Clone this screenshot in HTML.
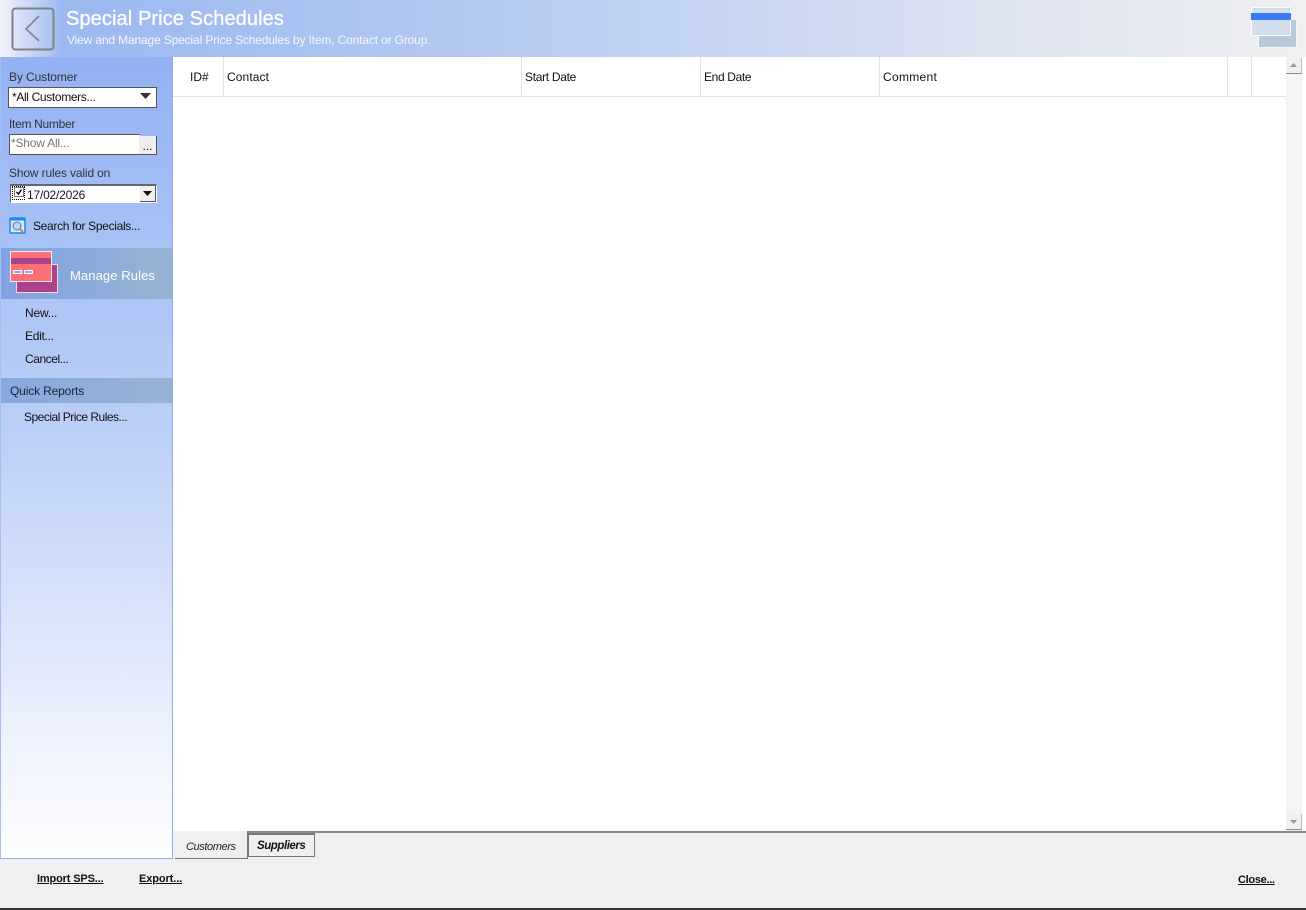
<!DOCTYPE html>
<html><head><meta charset="utf-8"><style>
html,body{margin:0;padding:0;width:1306px;height:910px;overflow:hidden;background:#f0f0f0;font-family:"Liberation Sans",sans-serif;font-size:12px;color:#111}
.a{position:absolute;white-space:nowrap}
.t{position:absolute;white-space:nowrap;line-height:14px}
.sep{position:absolute;top:57px;width:1px;height:39px;background:#e4e4e4}
</style></head><body>
<div class="a" style="left:0;top:0;width:1306px;height:57px;background:linear-gradient(90deg,#f2f4fa 0,#9db9f1 62px,#a3bdf0 200px,#bccff2 600px,#dde3f0 1000px,#eff0f2 1306px)"></div>
<svg class="a" style="left:0;top:0" width="70" height="57"><rect x="12.5" y="8.5" width="41" height="41" rx="3" fill="none" stroke="#7f8287" stroke-width="2"/><path d="M39 16L26 29L39 41" fill="none" stroke="#7f8287" stroke-width="1.6"/></svg>
<div class="t" style="left:66px;top:6px;font-size:20px;line-height:26px;color:#fff;-webkit-text-stroke:.3px #fff;letter-spacing:.1px">Special Price Schedules</div>
<div class="t" style="left:67px;top:33px;color:#f4f7ff;letter-spacing:-.15px">View and Manage Special Price Schedules by Item, Contact or Group.</div>
<svg class="a" style="left:1250px;top:6px" width="50" height="44"><rect x="8.500" y="13.500" width="38" height="28" fill="#b9c9dc" stroke="#f4f6fa"/><rect x="1.500" y="1.500" width="39" height="28" fill="#d4dfee" stroke="#fbfcfe"/><rect x="1" y="7" width="40" height="7" fill="#3a78f8"/></svg>

<div class="a" style="left:0;top:57px;width:171px;height:801px;background:linear-gradient(180deg,#93b1f3 0,#a9c2f5 190px,#bbcef7 370px,#d6e2fa 540px,#f0f4fd 700px,#fefeff 801px);border-right:1px solid #8eaef0;border-left:1px solid #a4bef2;border-bottom:1px solid #8eaef0"></div>
<div class="t" style="left:9px;top:70px;color:#333;letter-spacing:-.1px">By Customer</div>
<div class="a" style="left:8px;top:87px;width:147px;height:19px;background:#fff;border:1px solid #555"></div>
<div class="t" style="left:12px;top:90px;letter-spacing:-.35px">*All Customers...</div>
<svg class="a" style="left:140px;top:93px" width="12" height="7"><path d="M0 0H11L5.500 6Z" fill="#333"/></svg>
<div class="t" style="left:9px;top:117px;color:#333;letter-spacing:-.3px">Item Number</div>
<div class="a" style="left:9px;top:134px;width:130px;height:20px;background:#fff;border-top:1px solid #555;border-left:1px solid #555"></div>
<div class="a" style="left:139px;top:136px;width:18px;height:19px;background:#efefef;border-right:1px solid #555;border-bottom:1px solid #555;box-sizing:border-box;text-align:center;line-height:20px">...</div>
<div class="a" style="left:9px;top:154px;width:130px;height:1px;background:#555"></div>
<div class="t" style="left:11px;top:136px;color:#777;letter-spacing:-.2px">*Show All...</div>
<div class="t" style="left:9px;top:166px;color:#333;letter-spacing:-.15px">Show rules valid on</div>
<div class="a" style="left:10px;top:184px;width:147px;height:19px;background:#fff;border-top:2px solid #666;border-left:1px solid #666;border-right:1px solid #fff;border-bottom:1px solid #fff;box-sizing:border-box"></div>
<div class="a" style="left:12px;top:186px;width:13px;height:14px;border:1px dotted #000;box-sizing:border-box"></div>
<svg class="a" style="left:14px;top:187px" width="11" height="11"><rect x=".5" y=".5" width="9" height="9" fill="#fff" stroke="#777"/><path d="M2.500 5L4.500 7L7.500 2.500" fill="none" stroke="#000" stroke-width="1.400"/></svg>
<div class="t" style="left:27px;top:188px;color:#1a1033;letter-spacing:-.2px">17/02/2026</div>
<div class="a" style="left:140px;top:186px;width:16px;height:16px;background:#efefef;border-right:1px solid #555;border-bottom:1px solid #555;box-sizing:border-box"></div>
<svg class="a" style="left:143px;top:191px" width="10" height="6"><path d="M0 0H9L4.500 5Z" fill="#111"/></svg>
<svg class="a" style="left:9px;top:217px" width="17" height="17"><rect x="1" y="1" width="15" height="15" rx="1" fill="#d7e7fb" stroke="#1e88e8" stroke-width="1.500"/><rect x="1" y="1" width="15" height="2.500" fill="#1e88e8"/><circle cx="8" cy="9" r="4" fill="#bcd4ef" stroke="#5a7894"/><path d="M11 12L14 15" stroke="#d9822b" stroke-width="2"/></svg>
<div class="t" style="left:33px;top:219px;letter-spacing:-.32px">Search for Specials...</div>

<div class="a" style="left:1px;top:248px;width:171px;height:51px;background:linear-gradient(90deg,#80a2e3 0,#98b3d2 171px)"></div>
<svg class="a" style="left:9px;top:250px" width="50" height="44"><rect x="7.500" y="14.500" width="41" height="28" fill="#ab428c" stroke="#f3d7e8"/><rect x="1.500" y="1.500" width="41" height="30" fill="#ff6f78" stroke="#fdeaea"/><rect x="2" y="8" width="40" height="6" fill="#ab428c"/><rect x="4.500" y="20.500" width="8" height="3" fill="#8aaef0" stroke="#fff"/><rect x="15.500" y="20.500" width="8" height="3" fill="#8aaef0" stroke="#fff"/></svg>
<div class="t" style="left:70px;top:269px;font-size:13px;color:#fff;letter-spacing:.1px">Manage Rules</div>
<div class="t" style="left:25px;top:306px;letter-spacing:-.2px">New...</div>
<div class="t" style="left:25px;top:329px;letter-spacing:-.3px">Edit...</div>
<div class="t" style="left:25px;top:352px;letter-spacing:-.45px">Cancel...</div>
<div class="a" style="left:1px;top:378px;width:171px;height:25px;background:linear-gradient(90deg,#8aa7e0 0,#98b2d4 171px)"></div>
<div class="t" style="left:10px;top:384px;color:#14213d;letter-spacing:-.15px">Quick Reports</div>
<div class="t" style="left:24px;top:410px;letter-spacing:-.5px">Special Price Rules...</div>

<div class="a" style="left:173px;top:57px;width:1133px;height:774px;background:#fff"></div>
<div class="a" style="left:173px;top:96px;width:1113px;height:1px;background:#e4e4e4"></div>
<div class="sep" style="left:223px"></div><div class="sep" style="left:521px"></div><div class="sep" style="left:700px"></div><div class="sep" style="left:879px"></div><div class="sep" style="left:1227px"></div><div class="sep" style="left:1251px"></div>
<div class="t" style="left:190px;top:70px">ID#</div>
<div class="t" style="left:227px;top:70px;letter-spacing:.1px">Contact</div>
<div class="t" style="left:525px;top:70px;letter-spacing:-.3px">Start Date</div>
<div class="t" style="left:704px;top:70px;letter-spacing:-.35px">End Date</div>
<div class="t" style="left:883px;top:70px;letter-spacing:.3px">Comment</div>

<div class="a" style="left:1286px;top:57px;width:16px;height:774px;background-color:#f8f8f8;background-image:radial-gradient(#e6e6e6 .6px,transparent .7px);background-size:2px 2px"></div>
<div class="a" style="left:1286px;top:58px;width:16px;height:16px;background:#f0f0f0;border-bottom:1px solid #8a8a8a;border-right:1px solid #bbb;box-sizing:border-box"></div>
<svg class="a" style="left:1290px;top:62px" width="9" height="6"><path d="M0 5H7L3.500 1Z" fill="#999"/></svg>
<div class="a" style="left:1286px;top:814px;width:16px;height:16px;background:#f0f0f0;border-bottom:1px solid #8a8a8a;border-right:1px solid #bbb;box-sizing:border-box"></div>
<svg class="a" style="left:1290px;top:820px" width="9" height="6"><path d="M0 0H7L3.500 4Z" fill="#999"/></svg>

<div class="a" style="left:247px;top:831px;width:1059px;height:2px;background:#8a8a8a"></div>
<div class="a" style="left:175px;top:831px;width:73px;height:28px;background:#f0f0f0;border-right:1px solid #777;border-bottom:1px solid #777;box-sizing:border-box"></div>
<div class="t" style="left:186px;top:840px;font-style:italic;color:#222;font-size:11px;letter-spacing:-.4px">Customers</div>
<div class="a" style="left:248px;top:833px;width:67px;height:24px;background:#f0f0f0;border:1px solid #777;border-top:2px solid #777;box-sizing:border-box"></div>
<div class="t" style="left:257px;top:839px;font-style:italic;font-weight:bold;font-size:11.500px;letter-spacing:-.45px">Suppliers</div>
<div class="t" style="left:37px;top:872px;font-weight:bold;font-size:11px;text-decoration:underline;letter-spacing:-.15px">Import SPS...</div>
<div class="t" style="left:139px;top:872px;font-weight:bold;font-size:11px;text-decoration:underline;letter-spacing:-.1px">Export...</div>
<div class="t" style="left:1238px;top:873px;font-weight:bold;font-size:11px;text-decoration:underline;letter-spacing:-.3px">Close...</div>
<div class="a" style="left:0;top:908px;width:1306px;height:2px;background:#333"></div>
</body></html>
